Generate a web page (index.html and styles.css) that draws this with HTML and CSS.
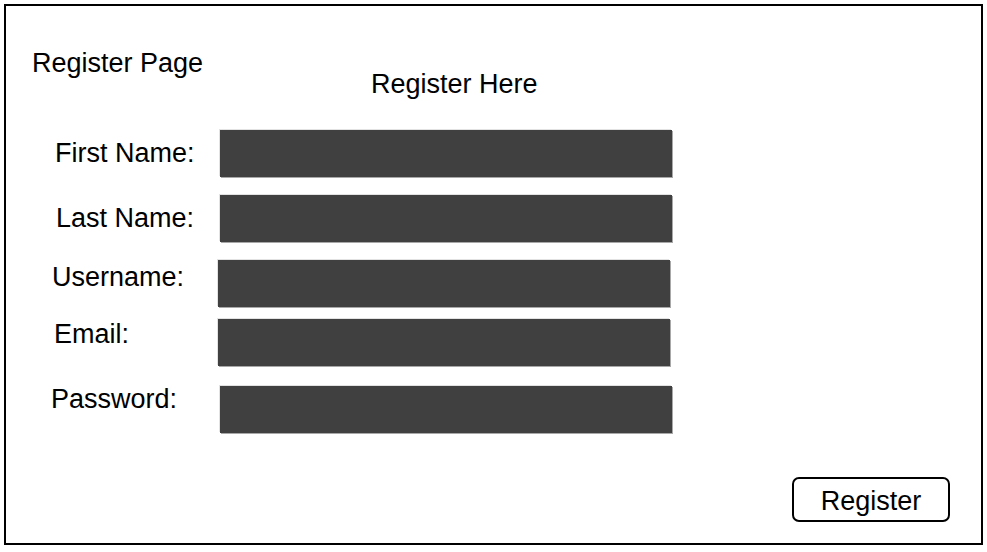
FILE: index.html
```html
<!DOCTYPE html>
<html lang="en">
<head>
  <meta charset="UTF-8">
  <meta name="viewport" content="width=device-width, initial-scale=1.0">
  <title>Register Page</title>
  <link rel="stylesheet" href="styles.css">
</head>
<body>
  <div class="frame">
    <div class="header">
      <div class="page-title">Register Page</div>
      <h1>Register Here</h1>
    </div>

    <form class="form">
      <div class="row">
        <label>First Name:</label>
        <div class="field"></div>
      </div>
      <div class="row row-last">
        <label>Last Name:</label>
        <div class="field"></div>
      </div>
      <div class="row row-user">
        <label>Username:</label>
        <div class="field"></div>
      </div>
      <div class="row row-email">
        <label>Email:</label>
        <div class="field"></div>
      </div>
      <div class="row row-pass">
        <label>Password:</label>
        <div class="field"></div>
      </div>
    </form>

    <div class="actions">
      <button type="button">Register</button>
    </div>
  </div>
</body>
</html>
```

FILE: styles.css
```css
body {
  font-family: "Liberation Sans", Arial, sans-serif;
  font-size: 27px;
  line-height: 30px;
  color: #000;
  background: #fff;
  margin: 0;
  padding: 0;
}
.frame {
  box-sizing: border-box;
  width: 979px;
  height: 541px;
  margin: 4px 0 0 4px;
  padding-top: 42px;
  border: 2px solid #000;
}
.header {
  display: flex;
  align-items: flex-start;
  padding-left: 26px;
}
.page-title {
  width: 339px;
}
h1 {
  margin: 21px 0 0;
  font-size: inherit;
  font-weight: normal;
}
.form {
  display: flex;
  flex-direction: column;
  gap: 18px;
  margin-top: 31px;
  padding-left: 49px;
}
.row {
  display: grid;
  grid-template-columns: 165px 452px;
  align-items: start;
}
.row label {
  margin-top: 8px;
}
.field {
  width: 452px;
  height: 47px;
  background: #404040;
  box-shadow: 1px 1px 0 #a8a8a8, -1px -1px 0 #e2e2e2;
}
.row-last label {
  margin-left: 1px;
}
.row-user label {
  margin: 2px 0 0 -3px;
}
.row-user .field {
  margin-left: -2px;
}
.row-email {
  margin-top: -6px;
}
.row-email label {
  margin: 0 0 0 -1px;
}
.row-email .field {
  margin-left: -2px;
}
.row-pass {
  margin-top: 2px;
}
.row-pass label {
  margin: -2px 0 0 -4px;
}
.actions {
  display: flex;
  justify-content: flex-end;
  margin-top: 44px;
  padding-right: 31px;
}
button {
  box-sizing: border-box;
  width: 158px;
  height: 45px;
  padding: 4px 0 0;
  font-family: inherit;
  font-size: inherit;
  color: #000;
  background: #fff;
  border: 2px solid #000;
  border-radius: 7px;
  cursor: pointer;
}
```
